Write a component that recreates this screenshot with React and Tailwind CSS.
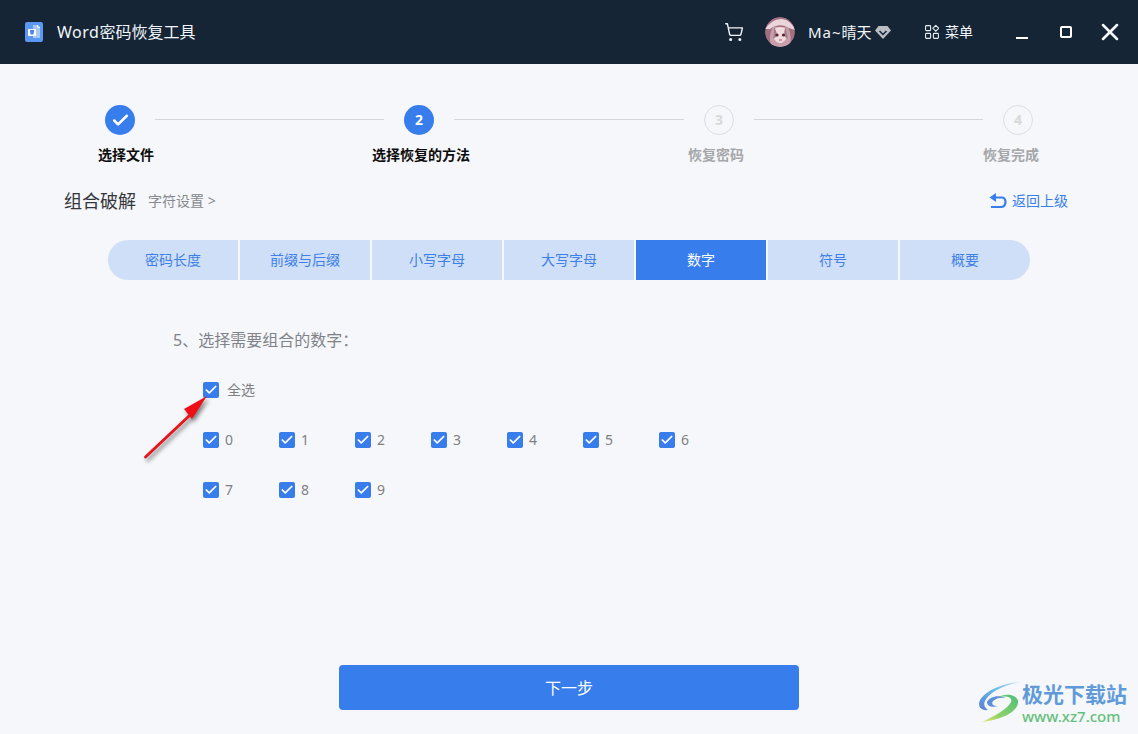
import { Check, ShoppingCart, X } from 'lucide-react'

const steps = [
  { label: '选择文件', state: 'done', nudge: 'ml-3' },
  { label: '选择恢复的方法', num: 2, state: 'active', line: 'w-[229px]', nudge: 'ml-1' },
  { label: '恢复密码', num: 3, state: 'todo', line: 'w-[230px]', nudge: 'mr-[6px]' },
  { label: '恢复完成', num: 4, state: 'todo', line: 'w-[229px]', nudge: 'mr-[14px]' },
]

const tabs = ['密码长度', '前缀与后缀', '小写字母', '大写字母', '数字', '符号', '概要']

function Tick({ label, wide }) {
  return (
    <div className={`flex items-center ${wide ? 'gap-2' : 'w-[76px] gap-[6px]'}`}>
      <span className="flex h-4 w-4 items-center justify-center rounded-[2px] bg-[#377dec]">
        <Check className="h-[14px] w-[14px] text-white" strokeWidth={3} />
      </span>
      <span className="text-sm text-[#7f7f82]">{label}</span>
    </div>
  )
}

function WordIcon() {
  return (
    <svg width="18" height="20" viewBox="0 0 18 20">
      <rect width="18" height="20" rx="2" fill="#5b98f2" />
      <path d="M8 3h5l2 2v11H8z" fill="#a5c8f9" />
      <path d="M12.5 3v2.5H15" fill="none" stroke="#fff" strokeWidth="0.8" />
      <rect x="3" y="7" width="8" height="7" rx="0.5" fill="#fff" />
      <path d="M5 8h4v1.5l-.6 3H5.6L5 9.5z" fill="#4a86e8" />
    </svg>
  )
}

function Avatar() {
  return (
    <svg width="30" height="30" viewBox="0 0 30 30">
      <circle cx="15" cy="15" r="15" fill="#a0707f" />
      <path d="M0 12Q8 1 17 2Q26 3 30 13L24 11Q15 5 5 12z" fill="#e9d5da" />
      <path d="M6 30Q3 18 8 10H23Q27 18 25 30z" fill="#c7a0ac" />
      <path d="M9 12Q15 8 21 12L22 20Q19 26 15 26T8 20z" fill="#f0dcdf" />
      <path d="M9 10Q13 16 11 20L8 22zM21 10Q18 15 20 20L23 22z" fill="#a97f8e" />
      <circle cx="12" cy="18" r="1.6" fill="#54242f" />
      <circle cx="18.5" cy="18" r="1.6" fill="#54242f" />
      <path d="M14 23h3" stroke="#b04a5a" strokeWidth="1.2" />
      <path d="M0 20Q3 26 8 29L3 25zM30 20Q27 26 22 29L27 25z" fill="#7c4a59" />
    </svg>
  )
}

function Gem() {
  return (
    <svg width="16" height="13" viewBox="0 0 16 13">
      <path d="M3.5 0h9L16 4.5 8 13 0 4.5z" fill="#b9bec4" />
      <path d="M4.5 5L8 8.5 11.5 5" fill="none" stroke="#152536" strokeWidth="1.5" />
    </svg>
  )
}

function MenuIcon() {
  return (
    <svg width="14" height="14" viewBox="0 0 14 14" fill="none" stroke="#e8edf2" strokeWidth="1.1">
      <rect x="0.6" y="0.6" width="5" height="5" rx="0.8" />
      <path d="M10.8 0.4l2.9 2.9-2.9 2.9-2.9-2.9z" />
      <rect x="0.6" y="8.4" width="5" height="5" rx="0.8" />
      <rect x="8.4" y="8.4" width="5" height="5" rx="0.8" />
    </svg>
  )
}

function BackIcon() {
  return (
    <svg width="18" height="16" viewBox="0 0 18 16" fill="none">
      <path d="M0.5 4.5L7 0V9z" fill="#377dec" />
      <path d="M5 4.5H12.5Q16.5 4.5 16.5 9T12.5 14H2" stroke="#377dec" strokeWidth="2.2" />
    </svg>
  )
}

function Arrow() {
  return (
    <svg className="absolute left-[140px] top-[392px] drop-shadow-[2px_3px_2px_rgba(0,0,0,0.5)]" width="85" height="72" viewBox="0 0 85 72">
      <path d="M5.5 65L49 24" stroke="#e8141c" strokeWidth="2.8" strokeLinecap="round" />
      <path d="M67 4L44 17 48 22 52 27z" fill="#ee0f16" />
    </svg>
  )
}

function Watermark() {
  return (
    <div className="absolute bottom-[9px] left-[978px] flex items-center">
      <svg width="46" height="42" viewBox="0 0 46 42">
        <defs>
          <linearGradient id="swoosh" x1="1" y1="0" x2="0" y2="1">
            <stop offset="0" stopColor="#b7e3ee" />
            <stop offset="0.5" stopColor="#62b5e8" />
            <stop offset="1" stopColor="#5b7fd0" />
          </linearGradient>
          <linearGradient id="leaf" x1="1" y1="0" x2="0" y2="1">
            <stop offset="0" stopColor="#4cbf78" />
            <stop offset="0.65" stopColor="#8ed36a" />
            <stop offset="1" stopColor="#efe17a" />
          </linearGradient>
        </defs>
        <path d="M42 0C26 1 8 8 2 18C-1 25 4 29 10 28C7 26 5 23 7 19C11 10 26 3 42 0z" fill="url(#swoosh)" />
        <path d="M28 16C20 12 11 15 9 20C9 24 14 26 20 24C15 24 13 22 15 19C18 16 23 15 28 16z" fill="#5b8fd8" />
        <path d="M19 16C27 13 35 15 33 20C30 27 16 34 4 40C20 38 38 32 40 21C41 13 28 10 19 16z" fill="url(#leaf)" />
      </svg>
      <div className="-ml-[2px] flex flex-col leading-none">
        <span className="text-[21px] font-bold leading-[26px] text-[#5f9bd8]">极光下载站</span>
        <span className="text-[15px] font-medium leading-[18px] text-[#63c07a]">www.xz7.com</span>
      </div>
    </div>
  )
}

export default function App() {
  return (
    <div className="relative h-[734px] w-full overflow-hidden bg-[#f6f7fa] font-['Noto_Sans','Noto_Sans_CJK_SC',sans-serif]">
      {/* title bar */}
      <div className="flex h-16 items-center bg-[#152536] pl-[25px] pr-[14px] text-[#f2f6fa]">
        <WordIcon />
        <span className="ml-[14px] text-base"><span className="tracking-[0.5px]">Word</span>密码恢复工具</span>
        <ShoppingCart className="ml-auto h-5 w-5" strokeWidth={1.7} />
        <div className="ml-[21px] h-[30px] w-[30px] overflow-hidden rounded-full"><Avatar /></div>
        <span className="ml-[13px] w-[63px] whitespace-nowrap text-[15px]"><span className="tracking-[1px]">Ma~</span>晴天</span>
        <span className="ml-1"><Gem /></span>
        <span className="ml-[34px]"><MenuIcon /></span>
        <span className="ml-[6px] w-7 whitespace-nowrap text-sm">菜单</span>
        <span className="ml-[43px] mt-[12px] h-[2px] w-3 bg-white" />
        <span className="ml-8 h-3 w-3 rounded-[2px] border-2 border-white" />
        <X className="ml-6 h-7 w-7" strokeWidth={2.2} />
      </div>

      {/* steps */}
      <div className="ml-[60px] mt-[41px] flex items-start">
        {steps.map((s, i) => (
          <div key={s.label} className="flex items-start">
            {i > 0 && <div className={`mx-[-25px] mt-[14px] h-px bg-[#d3d6db] ${s.line}`} />}
            <div className="flex w-[120px] flex-col items-center">
              {s.state === 'done' && (
                <span className="flex h-[30px] w-[30px] items-center justify-center rounded-full bg-[#377dec]">
                  <Check className="h-[19px] w-[19px] text-white" strokeWidth={3.2} />
                </span>
              )}
              {s.state === 'active' && (
                <span className="flex h-[30px] w-[30px] items-center justify-center rounded-full bg-[#377dec] text-sm font-bold text-white">{s.num}</span>
              )}
              {s.state === 'todo' && (
                <span className="flex h-[30px] w-[30px] items-center justify-center rounded-full border border-[#dcdee1] text-sm font-bold text-[#d8d9db]">{s.num}</span>
              )}
              <span className={`mt-[10px] text-sm font-bold leading-[19px] ${s.nudge} ${s.state === 'todo' ? 'text-[#a5a7aa]' : 'text-[#0c0c0c]'}`}>{s.label}</span>
            </div>
          </div>
        ))}
      </div>

      {/* heading */}
      <div className="ml-16 mr-[70px] mt-[23px] flex items-center">
        <span className="text-lg leading-[28px] text-[#33363a]">组合破解</span>
        <span className="ml-3 text-sm text-[#85888d]">字符设置 &gt;</span>
        <span className="ml-auto flex items-center gap-[5px] text-sm text-[#377dec]">
          <BackIcon />
          返回上级
        </span>
      </div>

      {/* tabs */}
      <div className="ml-[108px] mt-[25px] flex w-[922px] gap-[2px]">
        {tabs.map((t, i) => (
          <div
            key={t}
            className={`flex h-10 w-[130px] items-center justify-center text-sm ${
              t === '数字' ? 'bg-[#377dec] text-white' : 'bg-[#cfdff7] text-[#3f7fe8]'
            } ${i === 0 ? 'rounded-l-[20px]' : ''} ${i === tabs.length - 1 ? 'rounded-r-[20px]' : ''}`}
          >
            {t}
          </div>
        ))}
      </div>

      {/* digits */}
      <div className="ml-[173px] mt-[49px] text-base leading-[22px] text-[#7f8388]">5、选择需要组合的数字：</div>
      <div className="ml-[203px] mt-[29px] flex flex-col gap-[30px]">
        <div className="flex h-5"><Tick label="全选" wide /></div>
        <div className="flex h-5">
          {[0, 1, 2, 3, 4, 5, 6].map(n => <Tick key={n} label={n} />)}
        </div>
        <div className="flex h-5">
          {[7, 8, 9].map(n => <Tick key={n} label={n} />)}
        </div>
      </div>

      <button className="absolute bottom-[24px] left-[339px] h-[45px] w-[460px] rounded bg-[#377dec] pt-px text-base text-white">下一步</button>

      <Arrow />
      <Watermark />
    </div>
  )
}
